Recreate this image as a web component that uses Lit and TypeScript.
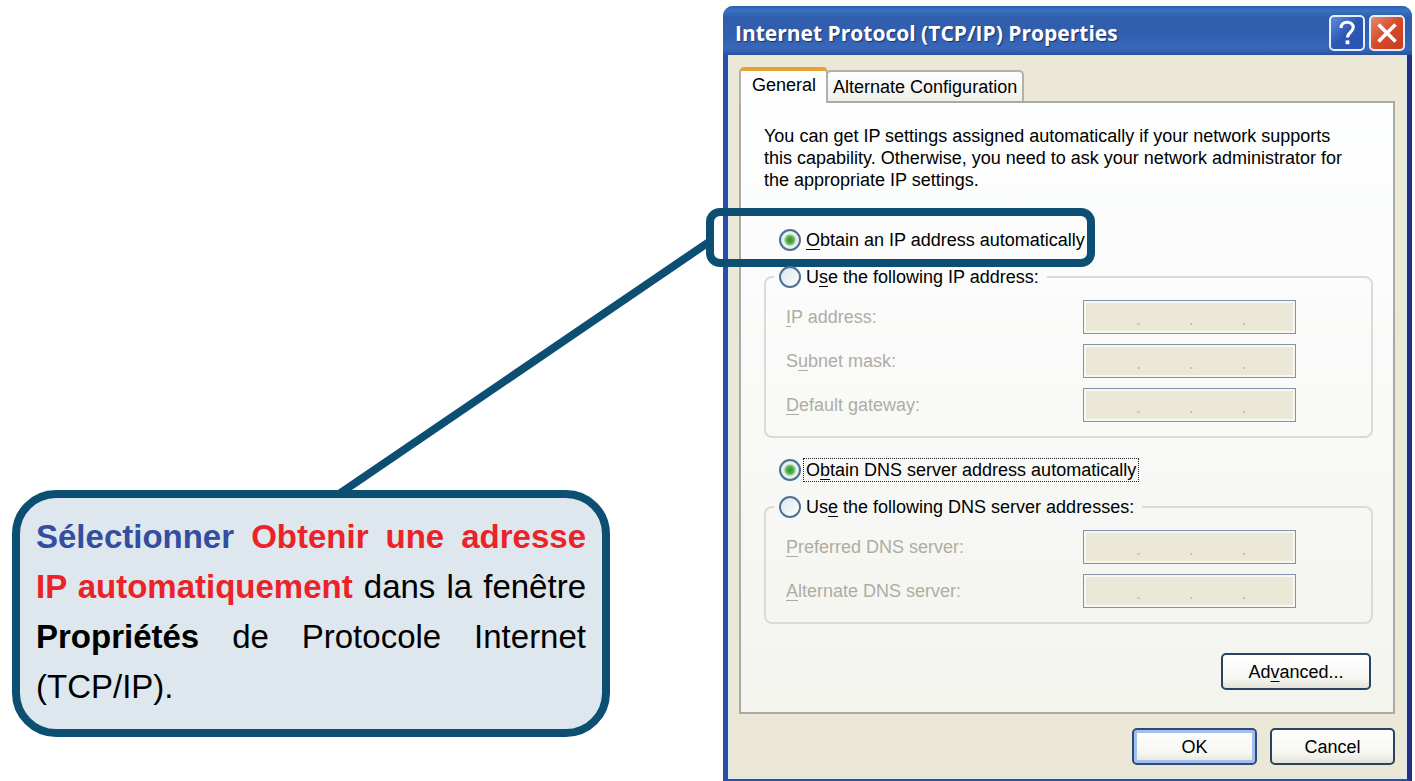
import { LitElement, html, css, svg } from "lit";
import { customElement, property } from "lit/decorators.js";

@customElement("ip-field")
class IpField extends LitElement {
  @property() label = "";
  @property() key = "";

  static styles = css`
    :host {
      display: grid;
      grid-template-columns: minmax(0, 298fr) minmax(0, 213fr) minmax(0, 55fr);
      align-items: center;
    }
    .caption {
      color: #aeada3;
      white-space: nowrap;
    }
    .caption u {
      text-underline-offset: 3px;
    }
    .box {
      box-sizing: border-box;
      display: flex;
      align-items: center;
      height: 34px;
      padding: 4px 1px 0 4px;
      border: 1px solid #8492a6;
      box-shadow: inset 0 0 0 2px #f6f8f6;
      background: #ebe8d8;
      color: #bdbbab;
    }
    .octet {
      flex: 1;
      min-width: 0;
      width: 0;
      padding: 0;
      border: 0;
      background: transparent;
      font: inherit;
      text-align: center;
    }
  `;

  render() {
    const at = this.label.indexOf(this.key);
    const before = this.label.slice(0, at);
    const after = this.label.slice(at + this.key.length);
    return html`
      <label class="caption" for="octet1">${before}<u>${this.key}</u>${after}</label>
      <div class="box">
        <input class="octet" id="octet1" disabled />.<input class="octet" aria-label="${this.label} 2" disabled />.<input
          class="octet"
          aria-label="${this.label} 3"
          disabled
        />.<input class="octet" aria-label="${this.label} 4" disabled />
      </div>
    `;
  }
}

@customElement("app-root")
class AppRoot extends LitElement {
  static styles = css`
    :host {
      display: block;
      min-height: 100vh;
      background: #fff;
      font-family: "Liberation Sans", Arial, sans-serif;
      color: #000;
    }
    .stage {
      display: grid;
      grid-template-columns: minmax(0, 723fr) minmax(0, 689fr);
      align-items: start;
      padding: 6px 3px 0 0;
    }

    /* Explanation on the left */
    .note {
      display: flex;
      flex-direction: column;
      padding: 236px 0 0 12px;
    }
    .connector {
      display: block;
      align-self: flex-end;
      box-sizing: border-box;
      width: 54%;
      height: 252px;
      padding-right: 14px;
      overflow: visible;
    }
    .callout {
      margin: -4px 113px 0 0;
      padding: 14px 16px 17px;
      border: 8px solid #0d4f73;
      border-radius: 44px;
      background: #dde7ed;
      font-size: 33px;
      line-height: 50px;
      text-align: justify;
    }
    .callout p {
      margin: 0;
    }
    .verb {
      color: #344da0;
    }
    .choice {
      color: #ec2229;
    }

    /* Dialog window */
    .dialog {
      border: solid #2b4ea6;
      border-width: 0 5px 3px;
      border-right-color: #22307f;
      border-radius: 10px 10px 0 0;
      background: #ebe8d7;
      font-size: 18px;
      line-height: 22px;
    }
    .titlebar {
      display: flex;
      align-items: center;
      gap: 4px;
      height: 49px;
      margin: 0 -5px;
      padding: 4px 7px 0 12px;
      box-sizing: border-box;
      border-radius: 10px 10px 0 0;
      background: linear-gradient(#2c5cae 0, #3a72c4 8%, #2f5cab 24%, #3260b0 60%, #3868bb 88%, #2a4f9e 100%);
      color: #fff;
    }
    .title {
      flex: 1;
      margin: 0;
      font: bold 21px/26px "Open Sans", "Noto Sans", sans-serif;
      white-space: nowrap;
      text-shadow: 1px 1px 1px #1a2f6b;
    }
    .caption-button {
      width: 36px;
      height: 36px;
      padding: 0;
      box-sizing: border-box;
      border: 2px solid #e6eefb;
      border-radius: 5px;
      background: linear-gradient(135deg, #5f8ddb, #2b56b4 50%, #2a55b8);
    }
    .caption-button.close {
      background: linear-gradient(135deg, #e58a6e, #d6492a 50%, #c83f1e);
    }
    .caption-button svg {
      display: block;
      width: 100%;
      height: 100%;
    }
    .body {
      padding: 11px 11px 13px 10px;
      border: solid #d9eaf5;
      border-width: 1px;
    }
    .tabs {
      display: flex;
      align-items: flex-end;
      height: 36px;
      margin-bottom: -2px;
    }
    .tab {
      box-sizing: border-box;
      padding: 0 5px;
      border: 2px solid #b0b2ac;
      border-bottom: 0;
      border-radius: 5px 5px 0 0;
      background: linear-gradient(#fefefe, #f0f0ea);
      color: #000;
      font: inherit;
      height: 31px;
      margin-bottom: 2px;
      white-space: nowrap;
    }
    .tab.active {
      position: relative;
      height: 36px;
      padding: 0 10px 4px 11px;
      margin: 0 -2px 0 0;
      border-top: 4px solid #e7a233;
      background: #fdfefd;
    }
    .panel {
      padding: 22px 20px 22px 23px;
      border: 2px solid #a9aaa6;
      background: linear-gradient(#fdfefe, #f9faf8 50%, #f3f4ee);
    }
    .intro {
      margin: 0 0 37px;
      padding-right: 16px;
    }
    .choice-row {
      display: flex;
      align-items: center;
      position: relative;
      height: 24px;
      margin: 0 15px;
    }
    .choice-row label {
      padding: 0 2px;
      margin-left: 3px;
      white-space: nowrap;
    }
    u {
      text-underline-offset: 3px;
    }
    .choice-row .focused {
      outline: 1px dotted #222;
    }
    .highlight {
      position: absolute;
      inset: -20px auto -15px -73px;
      width: 389px;
      box-sizing: border-box;
      border: 8px solid #0d4f73;
      border-radius: 14px;
      pointer-events: none;
    }
    .radio {
      appearance: none;
      flex: none;
      box-sizing: border-box;
      width: 22px;
      height: 22px;
      margin: 0;
      border: 2px solid #4b7194;
      border-radius: 50%;
      background: linear-gradient(135deg, #dce4ea, #fff);
    }
    .radio:checked {
      background: radial-gradient(circle, #2f8f2b 0, #5cb553 4px, #d5ead2 6px, #eef4f2 7px, #dfe8ee 9px);
    }
    .group {
      min-width: 0;
      margin: 13px 0 20px;
      padding: 0 20px 14px;
      border: 2px solid #dadbd2;
      border-radius: 8px;
    }
    .group legend {
      padding: 0;
      margin-left: -12px;
    }
    .group .choice-row {
      margin: 0;
      padding: 0 6px 0 5px;
    }
    .fields {
      display: grid;
      gap: 10px;
      padding-top: 11px;
    }
    .actions {
      display: flex;
      justify-content: flex-end;
      gap: 13px;
    }
    .panel .actions {
      padding: 9px 2px 0 0;
    }
    .body > .actions {
      padding-top: 14px;
    }
    .push {
      width: 125px;
      height: 37px;
      padding: 0;
      box-sizing: border-box;
      border: 2px solid #27455f;
      border-radius: 5px;
      background: linear-gradient(#fff, #f6f6f2 70%, #e4e2d8);
      color: #000;
      font: inherit;
    }
    .push.wide {
      width: 150px;
    }
    .push.default {
      box-shadow: inset 0 0 0 3px #a3bfec;
      border-color: #2a4a80;
    }
  `;

  private helpIcon() {
    return svg`<svg viewBox="0 0 32 32" aria-hidden="true">
      <path d="M10 11C10 3.2 22.2 3.6 22.2 10.6C22.2 15 16.6 15 16.4 20.5" fill="none" stroke="#fff" stroke-width="3.2"/>
      <rect x="14.6" y="23.4" width="3.8" height="3.8" fill="#fff"/>
    </svg>`;
  }

  private closeIcon() {
    return svg`<svg viewBox="0 0 32 32" aria-hidden="true">
      <path d="M7.5 7.5L24.5 24.5M24.5 7.5L7.5 24.5" fill="none" stroke="#fff" stroke-width="3.6"/>
    </svg>`;
  }

  render() {
    return html`
      <main class="stage">
        <aside class="note">
          <svg class="connector" viewBox="0 0 100 100" preserveAspectRatio="none" aria-hidden="true">
            <line x1="0" y1="100" x2="100" y2="0" stroke="#0d4f73" stroke-width="8" vector-effect="non-scaling-stroke" />
          </svg>
          <div class="callout">
            <p>
              <b class="verb">Sélectionner</b> <b class="choice">Obtenir une adresse IP automatiquement</b> dans la
              fenêtre <b>Propriétés</b> de Protocole Internet (TCP/IP).
            </p>
          </div>
        </aside>

        <section class="dialog">
          <header class="titlebar">
            <h1 class="title">Internet Protocol (TCP/IP) Properties</h1>
            <button class="caption-button" aria-label="Help">${this.helpIcon()}</button>
            <button class="caption-button close" aria-label="Close">${this.closeIcon()}</button>
          </header>
          <div class="body">
            <div class="tabs" role="tablist">
              <button class="tab active" role="tab" aria-selected="true">General</button>
              <button class="tab" role="tab" aria-selected="false">Alternate Configuration</button>
            </div>
            <div class="panel" role="tabpanel">
              <p class="intro">
                You can get IP settings assigned automatically if your network supports this capability. Otherwise, you
                need to ask your network administrator for the appropriate IP settings.
              </p>

              <div class="choice-row">
                <input class="radio" type="radio" name="ip" id="ip-auto" checked />
                <label for="ip-auto"><u>O</u>btain an IP address automatically</label>
                <span class="highlight"></span>
              </div>
              <fieldset class="group">
                <legend>
                  <div class="choice-row">
                    <input class="radio" type="radio" name="ip" id="ip-manual" />
                    <label for="ip-manual">U<u>s</u>e the following IP address:</label>
                  </div>
                </legend>
                <div class="fields">
                  <ip-field label="IP address:" key="I"></ip-field>
                  <ip-field label="Subnet mask:" key="u"></ip-field>
                  <ip-field label="Default gateway:" key="D"></ip-field>
                </div>
              </fieldset>

              <div class="choice-row">
                <input class="radio" type="radio" name="dns" id="dns-auto" checked />
                <label class="focused" for="dns-auto">O<u>b</u>tain DNS server address automatically</label>
              </div>
              <fieldset class="group">
                <legend>
                  <div class="choice-row">
                    <input class="radio" type="radio" name="dns" id="dns-manual" />
                    <label for="dns-manual">Us<u>e</u> the following DNS server addresses:</label>
                  </div>
                </legend>
                <div class="fields">
                  <ip-field label="Preferred DNS server:" key="P"></ip-field>
                  <ip-field label="Alternate DNS server:" key="A"></ip-field>
                </div>
              </fieldset>
              <div class="actions">
                <button class="push wide">Ad<u>v</u>anced...</button>
              </div>
            </div>
            <div class="actions">
              <button class="push default">OK</button>
              <button class="push">Cancel</button>
            </div>
          </div>
        </section>
      </main>
    `;
  }
}
